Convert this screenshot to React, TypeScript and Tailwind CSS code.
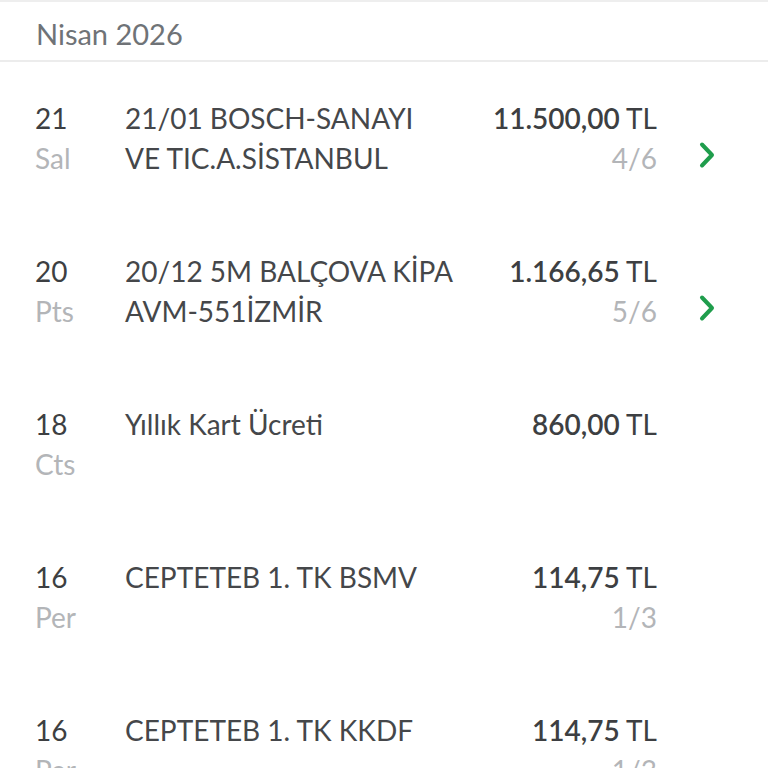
import React from "react";

type Txn = {
  day: string;
  weekday: string;
  lines: string[];
  amount: string;
  installment?: string;
  link?: boolean;
};

const txns: Txn[] = [
  { day: "21", weekday: "Sal", lines: ["21/01 BOSCH-SANAYI", "VE TIC.A.SİSTANBUL"], amount: "11.500,00", installment: "4/6", link: true },
  { day: "20", weekday: "Pts", lines: ["20/12 5M BALÇOVA KİPA", "AVM-551İZMİR"], amount: "1.166,65", installment: "5/6", link: true },
  { day: "18", weekday: "Cts", lines: ["Yıllık Kart Ücreti"], amount: "860,00" },
  { day: "16", weekday: "Per", lines: ["CEPTETEB 1. TK BSMV"], amount: "114,75", installment: "1/3" },
  { day: "16", weekday: "Per", lines: ["CEPTETEB 1. TK KKDF"], amount: "114,75", installment: "1/3" },
];

function Chevron() {
  return (
    <svg width="22" height="28" viewBox="0 0 22 28" fill="none">
      <path d="M5 3.5l10 10.5-10 10.5" stroke="#1f9d4c" strokeWidth="4" strokeLinecap="round" strokeLinejoin="round" />
    </svg>
  );
}

function Row({ t }: { t: Txn }) {
  return (
    <div className="flex h-[153px] pt-[36px] text-[28px] leading-[40px]">
      <div className="w-[125px] shrink-0 pl-[35px]">
        <div className="text-[#3d3f42]">{t.day}</div>
        <div className="text-[#b3b5b8]">{t.weekday}</div>
      </div>
      <div className="flex-1 text-[#45474a]">
        {t.lines.map((l, i) => (
          <div key={i}>{l}</div>
        ))}
      </div>
      <div className="w-[200px] shrink-0 text-right">
        <div className="text-[#3d3f42]">
          <span className="font-semibold">{t.amount}</span> TL
        </div>
        {t.installment && <div className="text-[#b3b5b8]">{t.installment}</div>}
      </div>
      <div className="flex w-[111px] shrink-0 items-start justify-start pl-[40px] pt-[43px]">
        {t.link && <Chevron />}
      </div>
    </div>
  );
}

export default function App() {
  return (
    <div className="h-[768px] w-[768px] overflow-hidden bg-white" style={{ fontFamily: "Lato, 'Noto Sans', sans-serif" }}>
      <div className="h-[2px] bg-[#eeeeee]" />
      <div className="h-[60px] border-b-2 border-[#ececec] pl-[36px] pt-[14px] text-[29px] leading-[36px] text-[#6f7377]">
        Nisan 2026
      </div>
      {txns.map((t, i) => (
        <Row key={i} t={t} />
      ))}
    </div>
  );
}
